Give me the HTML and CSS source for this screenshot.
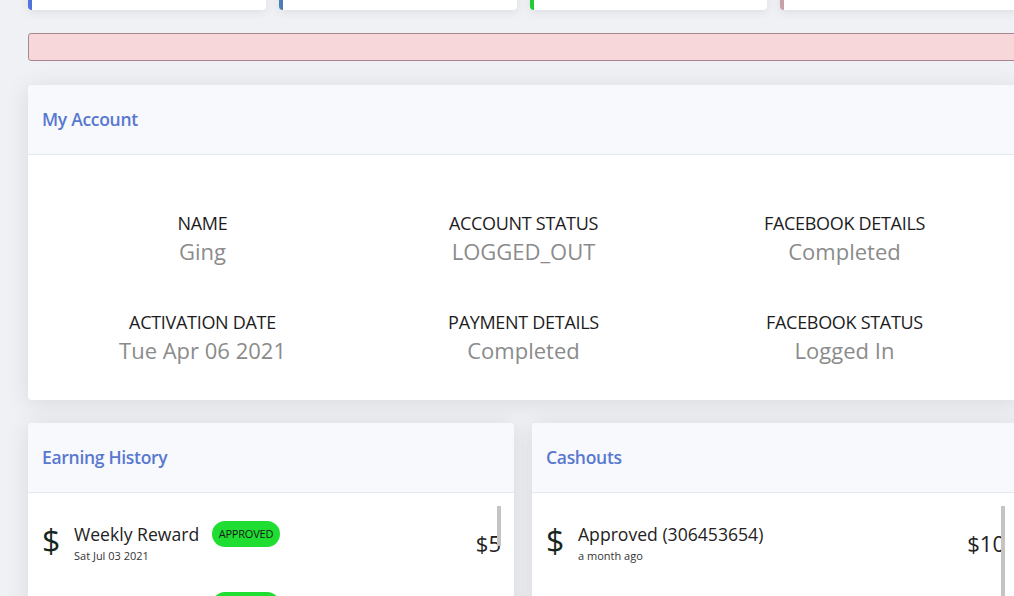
FILE: index.html
```html
<!DOCTYPE html>
<html lang="en">
<head>
<meta charset="utf-8">
<title>Dashboard</title>
<link rel="stylesheet" href="styles.css">
</head>
<body>
<div class="page">
  <div class="stats">
    <div class="stat stat-blue"></div>
    <div class="stat stat-teal"></div>
    <div class="stat stat-green"></div>
    <div class="stat stat-pink"></div>
  </div>

  <div class="alert"></div>

  <section class="card account">
    <header class="card-header"><h2 class="card-title">My Account</h2></header>
    <div class="account-body">
      <div class="field"><div class="field-label">NAME</div><div class="field-value">Ging</div></div>
      <div class="field"><div class="field-label">ACCOUNT STATUS</div><div class="field-value">LOGGED_OUT</div></div>
      <div class="field"><div class="field-label">FACEBOOK DETAILS</div><div class="field-value">Completed</div></div>
      <div class="field"><div class="field-label">ACTIVATION DATE</div><div class="field-value">Tue Apr 06 2021</div></div>
      <div class="field"><div class="field-label">PAYMENT DETAILS</div><div class="field-value">Completed</div></div>
      <div class="field"><div class="field-label">FACEBOOK STATUS</div><div class="field-value">Logged In</div></div>
    </div>
  </section>

  <div class="lists">
    <section class="card list-card">
      <header class="card-header"><h2 class="card-title">Earning History</h2></header>
      <div class="list-body">
        <div class="thumb thumb-short"></div>
        <div class="item">
          <span class="item-icon">$</span>
          <div class="item-text">
            <div class="item-title-row"><span class="item-title">Weekly Reward</span><span class="badge">APPROVED</span></div>
            <div class="item-sub">Sat Jul 03 2021</div>
          </div>
          <span class="item-amount">$5</span>
        </div>
        <div class="item">
          <span class="item-icon">$</span>
          <div class="item-text">
            <div class="item-title-row"><span class="item-title">Weekly Reward</span><span class="badge">APPROVED</span></div>
            <div class="item-sub">Sat Jun 26 2021</div>
          </div>
          <span class="item-amount">$5</span>
        </div>
      </div>
    </section>

    <section class="card list-card">
      <header class="card-header"><h2 class="card-title">Cashouts</h2></header>
      <div class="list-body">
        <div class="thumb thumb-long"></div>
        <div class="item">
          <span class="item-icon">$</span>
          <div class="item-text">
            <div class="item-title-row"><span class="item-title">Approved (306453654)</span></div>
            <div class="item-sub">a month ago</div>
          </div>
          <span class="item-amount">$10</span>
        </div>
        <div class="item">
          <span class="item-icon">$</span>
          <div class="item-text">
            <div class="item-title-row"><span class="item-title">Approved (305112870)</span></div>
            <div class="item-sub">2 months ago</div>
          </div>
          <span class="item-amount">$10</span>
        </div>
      </div>
    </section>
  </div>
</div>
</body>
</html>
```

FILE: styles.css
```css
* { box-sizing: border-box; }

html, body {
  margin: 0;
  padding: 0;
  overflow: hidden;
  height: 596px;
}

body {
  background: #f0f1f4;
  font-family: "Open Sans", "Liberation Sans", sans-serif;
  color: #222;
}

.page {
  width: 990px;
  margin-left: 28px;
  margin-top: -80px;
}

.stats {
  display: grid;
  grid-template-columns: repeat(4, 1fr);
  gap: 13px;
}

.stat {
  height: 90px;
  background: #fff;
  border-radius: 4px;
  border-left: 4px solid #4e73df;
  box-shadow: 0 2px 10px rgba(58, 59, 69, 0.10);
}
.stat-blue { border-left-color: #4e73df; }
.stat-teal { border-left-color: #4a7fb6; }
.stat-green { border-left-color: #22cc36; }
.stat-pink { border-left-color: #c8a1a8; }

.alert {
  margin-top: 23px;
  height: 28px;
  background: #f8d7da;
  border: 1px solid #a88890;
  border-radius: 3px;
}

.card {
  background: #fff;
  border-radius: 4px;
  box-shadow: 0 3px 22px rgba(58, 59, 69, 0.13);
  overflow: hidden;
}

.account { margin-top: 24px; }

.card-header {
  height: 70px;
  background: #f8f9fc;
  border-bottom: 1px solid #e6e8ef;
  display: flex;
  align-items: center;
  padding: 0 14px 2px;
}

.card-title {
  margin: 0;
  font-size: 17.5px;
  font-weight: 600;
  color: #5878d0;
  letter-spacing: -0.3px;
}

.account-body {
  display: grid;
  grid-template-columns: repeat(3, 321px);
  row-gap: 44px;
  padding: 55px 13px 36px 14px;
  text-align: center;
}

.field-label {
  font-size: 18px;
  line-height: 26px;
  color: #1c1c1e;
  letter-spacing: -0.3px;
}

.field-value {
  margin-top: 1px;
  font-size: 22px;
  line-height: 28px;
  color: #8b8b8b;
}

.lists {
  margin-top: 23px;
  display: grid;
  grid-template-columns: 486px 486px;
  gap: 18px;
}

.list-body {
  position: relative;
  padding: 14px 13px 0 14px;
  height: 200px;
}

.thumb {
  position: absolute;
  right: 13px;
  top: 13px;
  width: 4px;
  background: #c4c4c4;
}
.thumb-short { height: 40px; }
.thumb-long { height: 120px; }

.item {
  height: 71px;
  display: flex;
  align-items: center;
}

.item-icon {
  width: 32px;
  font-size: 32px;
  line-height: 32px;
  color: #16271e;
  margin-top: -4px;
}

.item-text {
  display: flex;
  flex-direction: column;
}

.item-title-row {
  display: flex;
  align-items: center;
  height: 26px;
}

.item-title {
  font-size: 17.6px;
  line-height: 22px;
  color: #222;
}

.badge {
  margin-left: 13px;
  height: 26px;
  padding: 0 6.5px;
  border-radius: 13px;
  background: #20dd32;
  color: #1a1a1a;
  font-size: 11px;
  line-height: 26px;
  letter-spacing: -0.2px;
}

.item-sub {
  font-size: 11px;
  line-height: 18px;
  color: #333;
}

.item-amount {
  margin-left: auto;
  font-size: 22px;
  color: #222;
}
```
